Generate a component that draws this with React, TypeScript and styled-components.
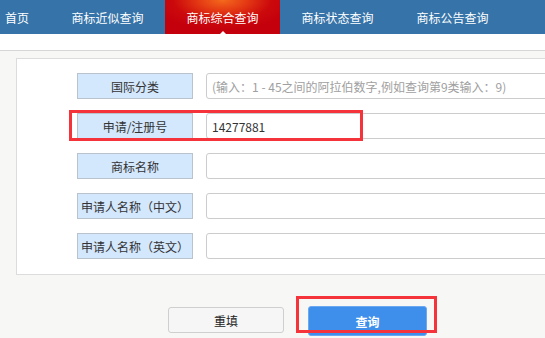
import React from 'react';
import styled, { createGlobalStyle } from 'styled-components';

const GlobalStyle = createGlobalStyle`
  html, body {
    margin: 0;
    padding: 0;
    background: #f7f7f5;
    overflow: hidden;
    font-family: "Noto Sans CJK SC", "Noto Sans", sans-serif;
  }
`;

const navItems = ['首页', '商标近似查询', '商标综合查询', '商标状态查询', '商标公告查询'];

const fields = [
  { label: '国际分类', placeholder: '(输入：1 - 45之间的阿拉伯数字,例如查询第9类输入：9)', value: '' },
  { label: '申请/注册号', placeholder: '', value: '14277881', marked: true },
  { label: '商标名称', placeholder: '', value: '' },
  { label: '申请人名称（中文）', placeholder: '', value: '' },
  { label: '申请人名称（英文）', placeholder: '', value: '' },
];

export default function App() {
  return (
    <Page>
      <GlobalStyle />
      <NavBar>
        {navItems.map((item, i) => (
          <NavItem key={item} $first={i === 0} $active={i === 2}>
            {item}
            {i === 2 && <Caret />}
          </NavItem>
        ))}
      </NavBar>
      <Strip />
      <Content>
        <Panel>
          {fields.map((f) => (
            <Row key={f.label}>
              <Label>{f.label}</Label>
              <Input placeholder={f.placeholder} defaultValue={f.value} />
              {f.marked && <RowMark />}
            </Row>
          ))}
        </Panel>
        <Buttons>
          <ResetButton>重填</ResetButton>
          <SearchWrap>
            <SearchButton>查询</SearchButton>
            <ButtonMark />
          </SearchWrap>
        </Buttons>
      </Content>
    </Page>
  );
}

const Page = styled.div`
  width: 545px;
  height: 338px;
  overflow: hidden;
`;

const NavBar = styled.div`
  display: flex;
  height: 34px;
  background: #3673a8;
`;

const NavItem = styled.div<{ $first?: boolean; $active?: boolean }>`
  position: relative;
  flex: 0 0 ${(p) => (p.$first ? '50px' : '115px')};
  box-sizing: border-box;
  padding-left: ${(p) => (p.$first ? '5px' : '0')};
  display: flex;
  align-items: center;
  justify-content: ${(p) => (p.$first ? 'flex-start' : 'center')};
  color: #fff;
  font-size: 12px;
  background: ${(p) =>
    p.$active
      ? 'radial-gradient(ellipse 60% 90% at 50% 0%, #f46a1c 0%, #e43a14 35%, #cc0a0c 70%, #c4000c 100%)'
      : 'transparent'};
`;

const Caret = styled.span`
  position: absolute;
  bottom: 0;
  left: 50%;
  margin-left: -3px;
  border-left: 3px solid transparent;
  border-right: 3px solid transparent;
  border-bottom: 3px solid #fff;
`;

const Strip = styled.div`
  height: 16px;
  background: #fff;
  border-bottom: 1px solid #d6d6d6;
`;

const Content = styled.div`
  padding: 7px 0 0 16px;
`;

const Panel = styled.div`
  background: #fff;
  border: 1px solid #dcdcdc;
  margin-right: -20px;
  padding: 14px 0 15px 60px;
  display: flex;
  flex-direction: column;
  gap: 14px;
`;

const Row = styled.div`
  position: relative;
  display: flex;
  align-items: center;
  gap: 13px;
  height: 26px;
`;

const Label = styled.div`
  flex: 0 0 116px;
  box-sizing: border-box;
  height: 26px;
  background: #d3e7fd;
  border: 1px solid #b9c3cd;
  display: flex;
  align-items: center;
  justify-content: center;
  font-size: 12px;
  color: #333;
  white-space: nowrap;
`;

const Input = styled.input`
  flex: 0 0 380px;
  box-sizing: border-box;
  height: 26px;
  border: 1px solid #cccccc;
  border-radius: 3px;
  padding: 0 5px;
  font-family: "Noto Sans CJK SC", "Noto Sans", sans-serif;
  font-size: 12px;
  color: #333;
  outline: none;

  &::placeholder {
    color: #a0a0a0;
  }
`;

const RowMark = styled.div`
  position: absolute;
  left: -8px;
  top: -3px;
  width: 294px;
  height: 31px;
  box-sizing: border-box;
  border: 3px solid #f5333a;
  pointer-events: none;
`;

const Buttons = styled.div`
  display: flex;
  align-items: flex-start;
  gap: 24px;
  padding: 31px 0 0 152px;
`;

const ResetButton = styled.button`
  box-sizing: border-box;
  width: 116px;
  height: 26px;
  margin-top: 1px;
  background: #f6f6f6;
  border: 1px solid #cfcfcf;
  border-radius: 3px;
  font-family: "Noto Sans CJK SC", "Noto Sans", sans-serif;
  font-size: 12px;
  color: #222;
`;

const SearchWrap = styled.div`
  position: relative;
`;

const SearchButton = styled.button`
  box-sizing: border-box;
  width: 119px;
  height: 30px;
  background: #3e8eec;
  border: 1px solid #6aa8f2;
  border-radius: 3px;
  font-family: "Noto Sans CJK SC", "Noto Sans", sans-serif;
  font-size: 12px;
  font-weight: bold;
  color: #fff;
`;

const ButtonMark = styled.div`
  position: absolute;
  left: -12px;
  top: -10px;
  width: 141px;
  height: 37px;
  box-sizing: border-box;
  border: 3px solid #f5333a;
  pointer-events: none;
`;
